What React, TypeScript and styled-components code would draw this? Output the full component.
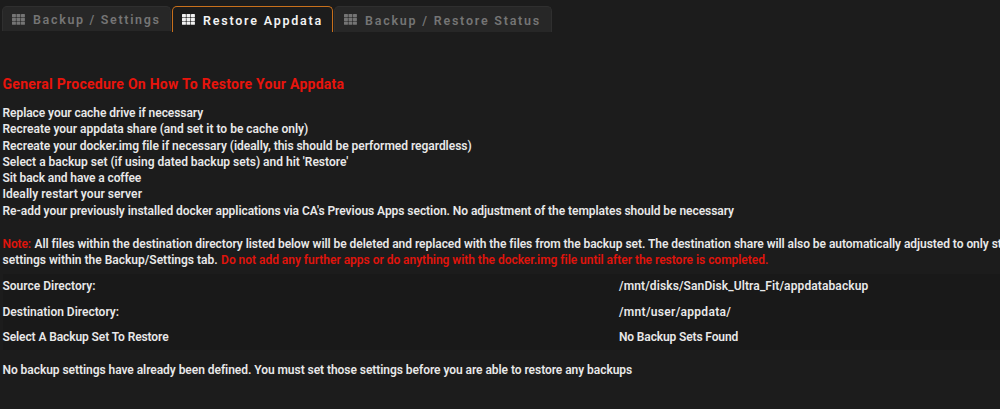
import React, {FC} from 'react';
import styled, {createGlobalStyle} from 'styled-components';


interface TrackedProps{
    $tracking?: number;
}

interface TabProps{
    $active?: boolean;
    $width: number;
    $height: number;
}

interface TabItem{
    label: string;
    active?: boolean;
    width: number;
    height: number;
    tracking: number;
}

const GlobalStyle = createGlobalStyle`
    *{
        box-sizing: border-box;
    }
    body{
        margin: 0;
        background: #1c1c1c;
        color: #e8e8e8;
        font-family: Roboto, "Liberation Sans", sans-serif;
        font-size: 12px;
        font-weight: 600;
        overflow: hidden;
    }
`;

const Page = styled.main`
    height: 409px;
    padding: 6px 0 0 2px;
    overflow: hidden;
`;

const TabBar = styled.nav`
    display: flex;
    align-items: flex-start;
    gap: 1px;
    height: 26px;
`;

const TabCore = styled.div<TabProps>`
    display: flex;
    align-items: center;
    gap: 8px;
    width: ${(props) => props.$width}px;
    height: ${(props) => props.$height}px;
    padding: 1px 0 0 9px;
    border: 1px solid ${(props) => props.$active ? '#c8701c' : '#2f2f2f'};
    border-bottom: 0;
    border-radius: 5px 5px 0 0;
    background: ${(props) => props.$active ? '#1c1c1c' : '#272727'};
    color: ${(props) => props.$active ? '#f2f2f2' : '#757575'};
    cursor: pointer;
    & > svg{
        flex: none;
        margin-top: -1px;
    }
`;

const TabLabel = styled.span<TrackedProps>`
    font-size: 12.5px;
    letter-spacing: ${(props) => props.$tracking}px;
    white-space: nowrap;
`;

const Title = styled.h1`
    margin: 43px 0 0;
    color: #e8140c;
    font-size: 14px;
    font-weight: 700;
    line-height: 18px;
    letter-spacing: 0.27px;
`;

const Content = styled.section`
    padding-left: 0.5px;
`;

const Steps = styled.ul`
    margin: 12px 0 0;
    padding: 0;
    list-style: none;
`;

const Line = styled.li<TrackedProps>`
    height: 16.3px;
    line-height: 16.3px;
    letter-spacing: ${(props) => props.$tracking || 0}px;
    white-space: nowrap;
`;

const Notice = styled.div`
    margin-top: 16.6px;
`;

const NoticeLine = styled.div`
    display: flex;
    gap: 3.5px;
    height: 16.3px;
    line-height: 16.3px;
    white-space: nowrap;
`;

const Text = styled.span<TrackedProps>`
    letter-spacing: ${(props) => props.$tracking || 0}px;
    white-space: nowrap;
`;

const Warning = styled(Text)`
    color: #e0140c;
`;

const Directories = styled.div`
    margin-top: 5.4px;
    background: #191919;
`;

const Row = styled.div`
    display: grid;
    grid-template-columns: 616.5px 1fr;
    align-items: center;
    height: 25.4px;
`;

const Footnote = styled.p`
    margin: 12px 0 0;
    line-height: 16px;
`;

const GridIcon: FC = () => (
    <svg width="13" height="11" viewBox="0 0 13 11" fill="currentColor">
        {[0, 3.8, 7.6].map((y) => [0, 4.5, 9].map((x) => (
            <rect key={`${x}-${y}`} x={x} y={y} width="3.9" height="3.2" rx="0.5"/>
        )))}
    </svg>
);

const tabs: TabItem[] = [
    {label: 'Backup / Settings', width: 169, height: 25, tracking: 1.67},
    {label: 'Restore Appdata', active: true, width: 161, height: 26, tracking: 1.78},
    {label: 'Backup / Restore Status', width: 218, height: 26, tracking: 1.77},
];

const steps = [
    {text: 'Replace your cache drive if necessary', tracking: -0.06},
    {text: 'Recreate your appdata share (and set it to be cache only)', tracking: 0},
    {text: 'Recreate your docker.img file if necessary (ideally, this should be performed regardless)', tracking: -0.03},
    {text: 'Select a backup set (if using dated backup sets) and hit \'Restore\'', tracking: 0},
    {text: 'Sit back and have a coffee', tracking: -0.1},
    {text: 'Ideally restart your server', tracking: 0.07},
    {text: 'Re-add your previously installed docker applications via CA\'s Previous Apps section. No adjustment of the templates should be necessary', tracking: -0.048},
];

const rows = [
    {label: 'Source Directory:', value: '/mnt/disks/SanDisk_Ultra_Fit/appdatabackup', labelTracking: 0, valueTracking: 0.11},
    {label: 'Destination Directory:', value: '/mnt/user/appdata/', labelTracking: 0, valueTracking: 0.3},
    {label: 'Select A Backup Set To Restore', value: 'No Backup Sets Found', labelTracking: -0.1, valueTracking: -0.13},
];

const Tab: FC<TabItem> = ({label, active, width, height, tracking}) => (
    <TabCore $active={active} $width={width} $height={height}>
        <GridIcon/>
        <TabLabel $tracking={tracking}>{label}</TabLabel>
    </TabCore>
);

const App: FC = () => (
    <>
        <GlobalStyle/>
        <Page>
            <TabBar>
                {tabs.map((tab) => <Tab key={tab.label} {...tab}/>)}
            </TabBar>
            <Content>
                <Title>General Procedure On How To Restore Your Appdata</Title>
                <Steps>
                    {steps.map(({text, tracking}) => <Line key={text} $tracking={tracking}>{text}</Line>)}
                </Steps>
                <Notice>
                    <NoticeLine>
                        <Warning $tracking={-0.1}>Note:</Warning>
                        <Text $tracking={-0.048}>All files within the destination directory listed below will be deleted and replaced with the files from the backup set. The destination share will also be automatically adjusted to only st</Text>
                    </NoticeLine>
                    <NoticeLine>
                        <Text>settings within the Backup/Settings tab.</Text>
                        <Warning $tracking={-0.027}>Do not add any further apps or do anything with the docker.img file until after the restore is completed.</Warning>
                    </NoticeLine>
                </Notice>
                <Directories>
                    {rows.map(({label, value, labelTracking, valueTracking}) => (
                        <Row key={label}>
                            <Text $tracking={labelTracking}>{label}</Text>
                            <Text $tracking={valueTracking}>{value}</Text>
                        </Row>
                    ))}
                </Directories>
                <Footnote>
                    <Text $tracking={-0.05}>No backup settings have already been defined. You must set those settings before you are able to restore any backups</Text>
                </Footnote>
            </Content>
        </Page>
    </>
);

export default App;
